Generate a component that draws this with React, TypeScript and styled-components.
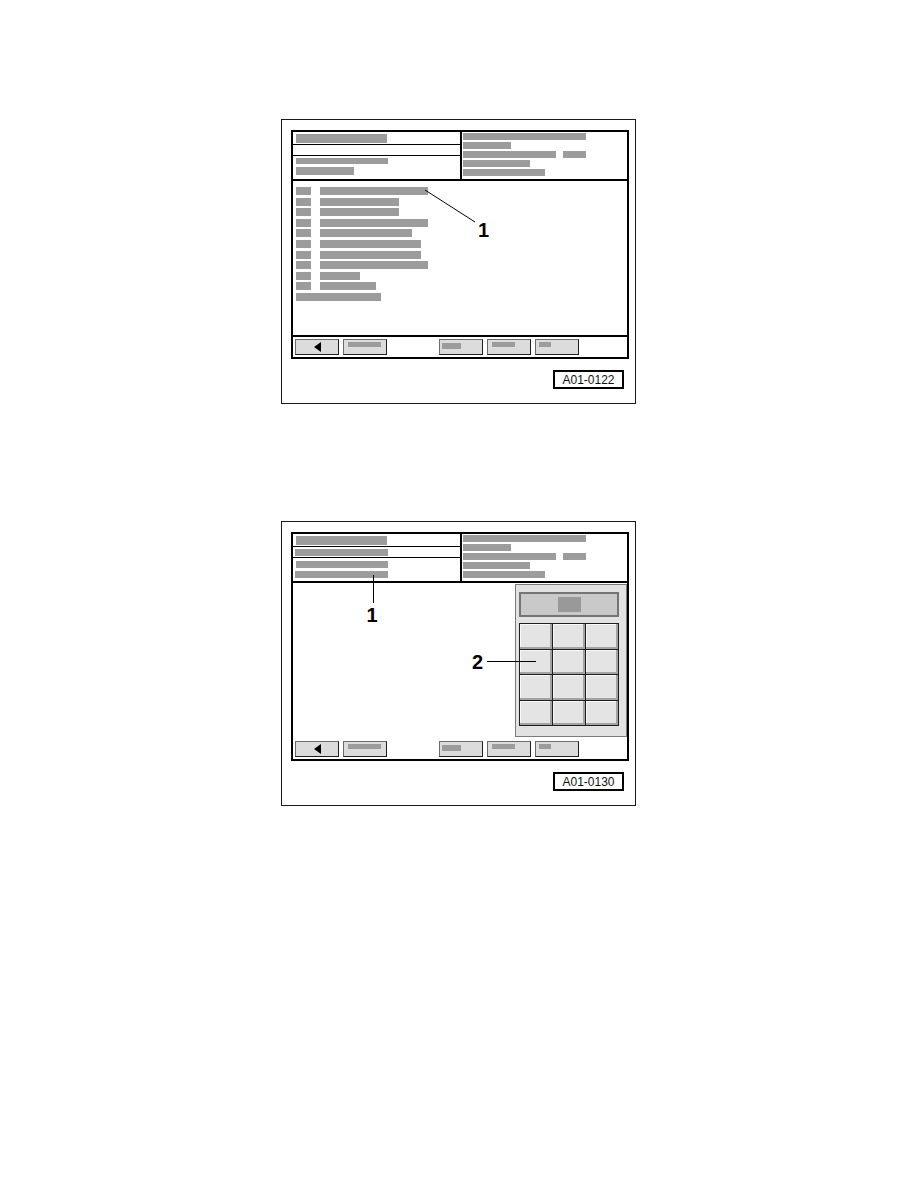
import React from 'react';
import styled, { createGlobalStyle } from 'styled-components';

const GlobalStyle = createGlobalStyle`
  html, body {
    margin: 0;
    padding: 0;
    background: #fff;
  }
  body {
    font-family: "Liberation Sans", Arial, sans-serif;
  }
`;

const GRAY = '#9c9c9c';

const Page = styled.div`
  display: flex;
  flex-direction: column;
  gap: 117px;
  padding: 119px 0 0 281px;
`;

const Figure = styled.div`
  position: relative;
  box-sizing: border-box;
  width: 355px;
  height: 285px;
  border: 1px solid #1a1a1a;
  padding: 10px 6px 0 9px;
  display: flex;
  flex-direction: column;
`;

const Screen = styled.div`
  box-sizing: border-box;
  width: 338px;
  height: 229px;
  border: 2px solid #000;
  display: flex;
  flex-direction: column;
`;

const Header = styled.div`
  flex: none;
  display: flex;
  height: 49px;
  box-sizing: border-box;
  border-bottom: 2px solid #000;
`;

const HeaderLeft = styled.div`
  width: 169px;
  box-sizing: border-box;
  border-right: 2px solid #000;
  display: flex;
  flex-direction: column;
`;

const HeaderRow = styled.div<{ $h: number; $last?: boolean; $pt?: number }>`
  box-sizing: border-box;
  height: ${(p) => p.$h}px;
  border-bottom: ${(p) => (p.$last ? 'none' : '1px solid #000')};
  padding: ${(p) => p.$pt ?? 2}px 0 0 3px;
  display: flex;
  flex-direction: column;
  gap: 3px;
`;

const HeaderRight = styled.div`
  flex: 1;
  padding: 1px 0 0 1px;
  display: flex;
  flex-direction: column;
  gap: 2px;
`;

const Bar = styled.span<{ $w: number; $h?: number; $ml?: number; $mt?: number }>`
  display: block;
  flex: none;
  width: ${(p) => p.$w}px;
  height: ${(p) => p.$h ?? 7}px;
  margin-left: ${(p) => p.$ml ?? 0}px;
  margin-top: ${(p) => p.$mt ?? 0}px;
  background: ${GRAY};
`;

const BarLine = styled.div`
  display: flex;
  gap: 7px;
`;

const Content = styled.div`
  flex: 1;
  min-height: 0;
  display: flex;
`;

const List = styled.div`
  padding: 6px 0 0 3px;
  display: flex;
  flex-direction: column;
  gap: 2.6px;
`;

const ListRow = styled.div`
  display: flex;
  gap: 9px;
`;

const Toolbar = styled.div<{ $line: boolean }>`
  flex: none;
  box-sizing: border-box;
  height: 22px;
  border-top: 2px solid ${(p) => (p.$line ? '#000' : 'transparent')};
  padding: 2px 0 2px 2px;
  display: flex;
  gap: 4px;
`;

const ToolButton = styled.div<{ $ml?: number; $center?: boolean }>`
  box-sizing: border-box;
  width: 44px;
  height: 16px;
  margin-left: ${(p) => p.$ml ?? 0}px;
  background: #dcdcdc;
  border: 1px solid #6a6a6a;
  border-right-color: #1e1e1e;
  border-bottom-color: #1e1e1e;
  display: flex;
  align-items: ${(p) => (p.$center ? 'center' : 'flex-start')};
  justify-content: ${(p) => (p.$center ? 'center' : 'flex-start')};
  padding-top: ${(p) => (p.$center ? 0 : 2)}px;
`;

const BackArrow = styled.span`
  width: 0;
  height: 0;
  border-top: 5px solid transparent;
  border-bottom: 5px solid transparent;
  border-right: 7px solid #000;
`;

const Keypad = styled.div`
  box-sizing: border-box;
  width: 112px;
  height: 153px;
  margin: 1px 0 0 auto;
  background: #e2e2e2;
  border: 1px solid #7a7a7a;
  padding: 7px 0 0 3px;
  display: flex;
  flex-direction: column;
  gap: 6px;
`;

const KeyDisplay = styled.div`
  box-sizing: border-box;
  width: 100px;
  height: 25px;
  background: #c9c9c9;
  border: 2px solid #747474;
  display: flex;
  align-items: center;
  justify-content: center;
`;

const DisplayBlock = styled.span`
  width: 23px;
  height: 15px;
  background: #999;
`;

const KeyGrid = styled.div`
  box-sizing: border-box;
  width: 100px;
  height: 103px;
  display: grid;
  grid-template-columns: repeat(3, 1fr);
  grid-template-rows: repeat(4, 1fr);
  gap: 1px;
  background: #1e1e1e;
  border: 1px solid #1e1e1e;
`;

const Key = styled.div`
  background: #e4e4e4;
  box-shadow: inset -2px -2px 0 #a3a3a3, inset 1px 1px 0 #f8f8f8;
`;

const Tag = styled.div`
  align-self: flex-end;
  box-sizing: border-box;
  width: 71px;
  height: 19px;
  margin: 11px 5px 0 0;
  border: 2px solid #000;
  font-size: 12px;
  color: #111;
  display: flex;
  align-items: center;
  justify-content: center;
`;

const Callout = styled.span<{ $x: number; $y: number }>`
  position: absolute;
  left: ${(p) => p.$x}px;
  top: ${(p) => p.$y}px;
  font-size: 20px;
  font-weight: 700;
  line-height: 1;
  color: #000;
`;

const Leaders = styled.svg`
  position: absolute;
  left: 0;
  top: 0;
  width: 353px;
  height: 283px;
  pointer-events: none;
`;

const listWidths = [108, 79, 79, 108, 92, 101, 101, 108, 40, 56];

const RightHeader = () => (
  <HeaderRight>
    <Bar $w={123} />
    <Bar $w={48} />
    <BarLine>
      <Bar $w={93} />
      <Bar $w={23} />
    </BarLine>
    <Bar $w={67} />
    <Bar $w={82} />
  </HeaderRight>
);

const BottomBar = ({ line }: { line: boolean }) => (
  <Toolbar $line={line}>
    <ToolButton $center>
      <BackArrow />
    </ToolButton>
    <ToolButton>
      <Bar $w={33} $h={5} $ml={4} />
    </ToolButton>
    <ToolButton $ml={48}>
      <Bar $w={19} $h={6} $ml={2} $mt={1} />
    </ToolButton>
    <ToolButton>
      <Bar $w={23} $h={5} $ml={4} />
    </ToolButton>
    <ToolButton>
      <Bar $w={12} $h={5} $ml={3} />
    </ToolButton>
  </Toolbar>
);

const ListFigure = () => (
  <Figure>
    <Screen>
      <Header>
        <HeaderLeft>
          <HeaderRow $h={13}>
            <Bar $w={91} $h={9} />
          </HeaderRow>
          <HeaderRow $h={11} />
          <HeaderRow $h={23} $last>
            <Bar $w={92} $h={6} />
            <Bar $w={58} $h={8} />
          </HeaderRow>
        </HeaderLeft>
        <RightHeader />
      </Header>
      <Content>
        <List>
          {listWidths.map((w, i) => (
            <ListRow key={i}>
              <Bar $w={15} $h={8} />
              <Bar $w={w} $h={8} />
            </ListRow>
          ))}
          <Bar $w={85} $h={8} />
        </List>
      </Content>
      <BottomBar line />
    </Screen>
    <Tag>A01-0122</Tag>
    <Leaders viewBox="0 0 353 283">
      <line x1={143} y1={70} x2={193} y2={102} stroke="#000" strokeWidth={1} />
    </Leaders>
    <Callout $x={196} $y={100}>1</Callout>
  </Figure>
);

const KeypadFigure = () => (
  <Figure>
    <Screen>
      <Header>
        <HeaderLeft>
          <HeaderRow $h={13} $pt={2}>
            <Bar $w={91} $h={9} />
          </HeaderRow>
          <HeaderRow $h={11} $pt={2}>
            <Bar $w={93} $h={7} $ml={-1} />
          </HeaderRow>
          <HeaderRow $h={23} $last $pt={3}>
            <Bar $w={92} $h={7} />
            <Bar $w={93} $h={7} $ml={-1} />
          </HeaderRow>
        </HeaderLeft>
        <RightHeader />
      </Header>
      <Content>
        <Keypad>
          <KeyDisplay>
            <DisplayBlock />
          </KeyDisplay>
          <KeyGrid>
            {Array.from({ length: 12 }, (_, i) => (
              <Key key={i} />
            ))}
          </KeyGrid>
        </Keypad>
      </Content>
      <BottomBar line={false} />
    </Screen>
    <Tag>A01-0130</Tag>
    <Leaders viewBox="0 0 353 283">
      <line x1={91.5} y1={53} x2={91.5} y2={81} stroke="#000" strokeWidth={1} />
      <line x1={205} y1={139.5} x2={254} y2={139.5} stroke="#000" strokeWidth={1} />
    </Leaders>
    <Callout $x={84.5} $y={83}>1</Callout>
    <Callout $x={190} $y={130}>2</Callout>
  </Figure>
);

export default function App() {
  return (
    <>
      <GlobalStyle />
      <Page>
        <ListFigure />
        <KeypadFigure />
      </Page>
    </>
  );
}
